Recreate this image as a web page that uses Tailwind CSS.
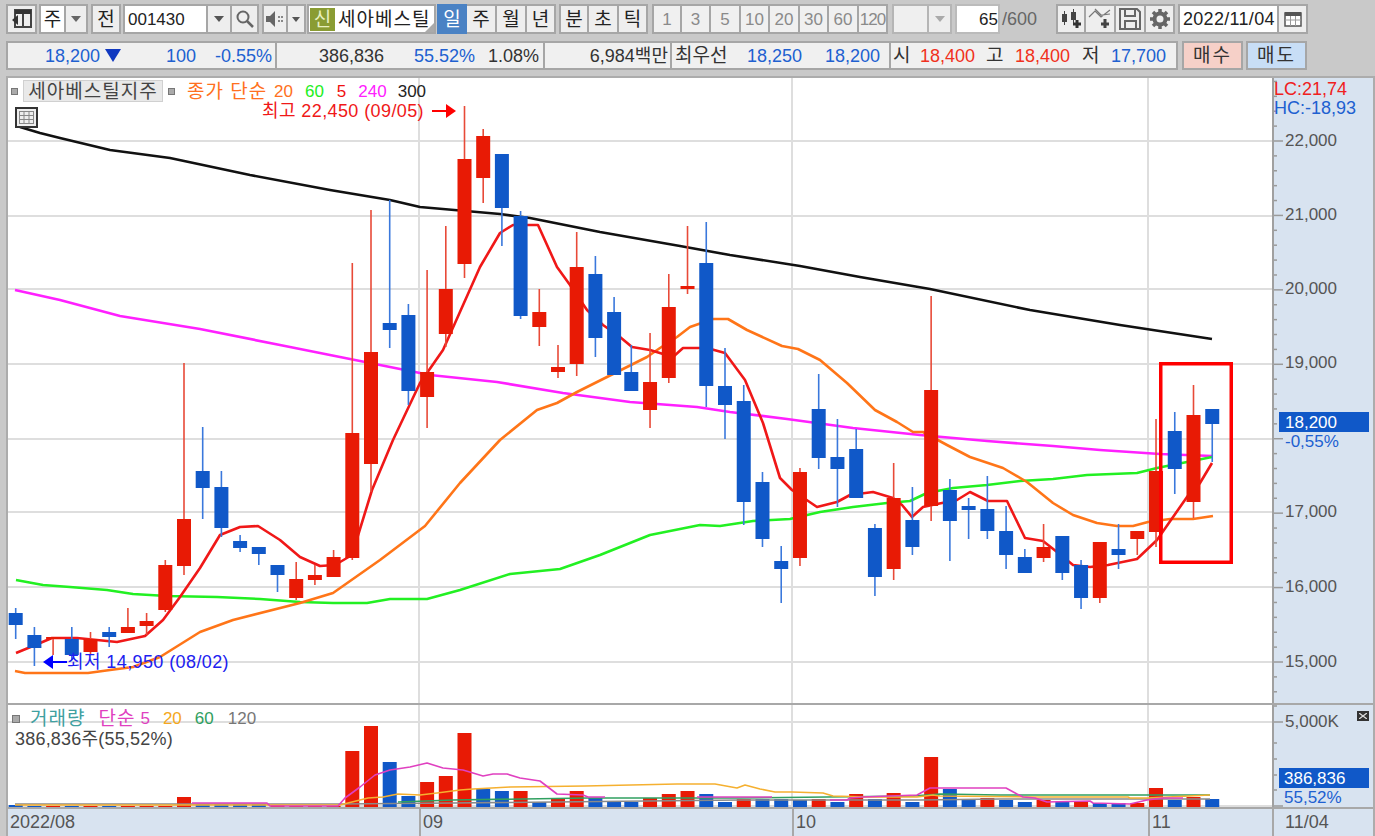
<!DOCTYPE html>
<html lang="ko">
<head>
  <meta charset="UTF-8" />
  <title>세아베스틸지주 차트</title>
  <script src="https://cdn.jsdelivr.net/npm/@tailwindcss/browser@4"></script>
</head>
<body class="bg-[#c9c9c9] [font-family:'Liberation_Sans','Noto_Sans_CJK_KR',sans-serif] text-[#222] overflow-hidden">
<div class="w-[1375px] h-[836px] flex flex-col overflow-hidden">

  <!-- Toolbar row 1 -->
  <div class="flex items-stretch h-[30px] mt-[4px] ml-[6px] text-[19px] leading-none">
    <div class="w-[31px] border-2 border-[#a6a6a6] bg-[#eee] flex items-center justify-center">
      <svg width="22" height="20" viewBox="0 0 22 20"><rect x="4" y="1" width="16" height="17" fill="none" stroke="#444" stroke-width="2"/><rect x="4" y="1" width="16" height="4" fill="#333"/><rect x="11" y="5" width="2" height="13" fill="#444"/><path d="M1 11 L7 6 V16 Z" fill="#333"/></svg>
    </div>
    <div class="ml-[2px] w-[27px] border-2 border-[#a6a6a6] bg-white flex items-center justify-center">주</div>
    <div class="w-[22px] border-2 border-l-0 border-[#a6a6a6] bg-[#eee] flex items-center justify-center">
      <svg width="10" height="6"><path d="M0 0H10L5 6Z" fill="#666"/></svg>
    </div>
    <div class="ml-[3px] w-[30px] border-2 border-[#a6a6a6] bg-[#eee] flex items-center justify-center">전</div>
    <div class="ml-[2px] w-[85px] border-2 border-[#a6a6a6] bg-white flex items-center pl-[3px] text-[17px]">001430</div>
    <div class="w-[22px] border-y-2 border-[#a6a6a6] bg-[#eee] flex items-center justify-center">
      <svg width="10" height="6"><path d="M0 0H10L5 6Z" fill="#555"/></svg>
    </div>
    <div class="w-[29px] border-2 border-[#a6a6a6] bg-[#eee] flex items-center justify-center">
      <svg width="20" height="20" viewBox="0 0 20 20"><circle cx="8" cy="8" r="5.500" fill="none" stroke="#666" stroke-width="2"/><path d="M12 12L18 18" stroke="#666" stroke-width="2.500"/></svg>
    </div>
    <div class="ml-[3px] w-[26px] border-2 border-[#a6a6a6] bg-[#eee] flex items-center justify-center">
      <svg width="20" height="18" viewBox="0 0 20 18"><path d="M1 6H5L10 1V17L5 12H1Z" fill="#666"/><path d="M13 6h2v2h-2zM16 6h2v2h-2zM13 10h2v2h-2zM16 10h2v2h-2z" fill="#888"/></svg>
    </div>
    <div class="w-[18px] border-2 border-l-0 border-[#a6a6a6] bg-[#eee] flex items-center justify-center">
      <svg width="8" height="5"><path d="M0 0H8L4 5Z" fill="#555"/></svg>
    </div>
    <div class="ml-[1px] w-[129px] border-2 border-[#a6a6a6] bg-white flex items-center pl-[1px] gap-[3px] relative">
      <span class="w-[25px] h-[23px] bg-[#8a9c33] text-[#e8f0c0] flex items-center justify-center">신</span>
      <span class="whitespace-nowrap tracking-[1px]">세아베스틸</span>
      <svg class="absolute right-0 bottom-0" width="9" height="9"><path d="M9 0V9H0Z" fill="#aaa"/></svg>
    </div>
    <div class="ml-[1px] flex">
      <div class="w-[30px] bg-[#4a82c4] text-white flex items-center justify-center">일</div>
      <div class="w-[30px] border-2 border-l-0 border-[#a6a6a6] bg-[#eee] flex items-center justify-center">주</div>
      <div class="w-[30px] border-2 border-l-0 border-[#a6a6a6] bg-[#eee] flex items-center justify-center">월</div>
      <div class="w-[29px] border-2 border-l-0 border-[#a6a6a6] bg-[#eee] flex items-center justify-center">년</div>
    </div>
    <div class="ml-[3px] flex">
      <div class="w-[30px] border-2 border-[#a6a6a6] bg-[#eee] flex items-center justify-center">분</div>
      <div class="w-[30px] border-2 border-l-0 border-[#a6a6a6] bg-[#eee] flex items-center justify-center">초</div>
      <div class="w-[29px] border-2 border-l-0 border-[#a6a6a6] bg-[#eee] flex items-center justify-center">틱</div>
    </div>
    <div class="ml-[4px] flex text-[#8a8a8a] text-[17px]">
      <div class="w-[30px] border-2 border-[#a6a6a6] bg-[#f0f0f0] flex items-center justify-center">1</div>
      <div class="w-[29px] border-2 border-l-0 border-[#a6a6a6] bg-[#f0f0f0] flex items-center justify-center">3</div>
      <div class="w-[30px] border-2 border-l-0 border-[#a6a6a6] bg-[#f0f0f0] flex items-center justify-center">5</div>
      <div class="w-[29px] border-2 border-l-0 border-[#a6a6a6] bg-[#f0f0f0] flex items-center justify-center">10</div>
      <div class="w-[30px] border-2 border-l-0 border-[#a6a6a6] bg-[#f0f0f0] flex items-center justify-center">20</div>
      <div class="w-[29px] border-2 border-l-0 border-[#a6a6a6] bg-[#f0f0f0] flex items-center justify-center">30</div>
      <div class="w-[30px] border-2 border-l-0 border-[#a6a6a6] bg-[#f0f0f0] flex items-center justify-center">60</div>
      <div class="w-[29px] border-2 border-l-0 border-[#a6a6a6] bg-[#f0f0f0] flex items-center justify-center tracking-[-1px]">120</div>
    </div>
    <div class="ml-[4px] w-[37px] border-2 border-[#b5b5b5] bg-[#efefef]"></div>
    <div class="w-[23px] border-2 border-l-0 border-[#b5b5b5] bg-[#eee] flex items-center justify-center">
      <svg width="10" height="6"><path d="M0 0H10L5 6Z" fill="#aaa"/></svg>
    </div>
    <div class="ml-[3px] w-[45px] bg-white border-2 border-[#bbb] flex items-center justify-end text-[17px]">65</div>
    <div class="ml-[2px] w-[54px] flex items-center text-[#666] text-[18px]">/600</div>
    <div class="flex">
      <div class="w-[30px] border-2 border-[#a6a6a6] bg-[#eee] flex items-center justify-center">
        <svg width="24" height="22" viewBox="0 0 24 22"><path d="M3 6h5v8H3zM12 4h5v8h-5z" fill="#444"/><path d="M5.500 3v14M14.500 1v14" stroke="#444"/><path d="M18 12v8M14 16h8" stroke="#333" stroke-width="3"/></svg>
      </div>
      <div class="w-[30px] border-2 border-l-0 border-[#a6a6a6] bg-[#eee] flex items-center justify-center">
        <svg width="24" height="22" viewBox="0 0 24 22"><path d="M1 9L7 3L13 9L22 2M7 1L13 7L22 6" fill="none" stroke="#777" stroke-width="1.200"/><path d="M17 11v9M13 16h8" stroke="#444" stroke-width="3"/></svg>
      </div>
      <div class="w-[30px] border-2 border-l-0 border-[#a6a6a6] bg-[#eee] flex items-center justify-center">
        <svg width="24" height="22" viewBox="0 0 24 22"><path d="M2 1H19L22 4V21H2Z" fill="none" stroke="#666" stroke-width="2"/><path d="M7 2V8H17V2M7 21V13H18V21" fill="none" stroke="#666" stroke-width="2"/></svg>
      </div>
      <div class="w-[29px] border-2 border-l-0 border-[#a6a6a6] bg-[#eee] flex items-center justify-center">
        <svg width="22" height="22" viewBox="0 0 22 22"><circle cx="11" cy="11" r="5.500" fill="none" stroke="#666" stroke-width="4"/><path d="M11 1v20M1 11h20M4 4l14 14M18 4L4 18" stroke="#666" stroke-width="3.500" stroke-dasharray="3.500 13"/></svg>
      </div>
    </div>
    <div class="ml-[3px] w-[101px] border-2 border-[#a6a6a6] bg-white flex items-center pl-[3px] whitespace-nowrap text-[18px] tracking-[0.3px]">2022/11/04</div>
    <div class="w-[29px] border-2 border-l-0 border-[#a6a6a6] bg-[#eee] flex items-center justify-center">
      <svg width="18" height="16" viewBox="0 0 18 16"><rect x="1" y="2" width="16" height="13" fill="#fff" stroke="#555" stroke-width="1.500"/><rect x="1" y="1" width="16" height="4" fill="#555"/><path d="M1 9h16M6.500 5v10M11.500 5v10" stroke="#999"/></svg>
    </div>
  </div>

  <!-- Toolbar row 2: quote strip -->
  <div class="flex h-[29px] mt-[7px] ml-[6px] text-[18px] leading-none text-[#333] whitespace-nowrap">
    <div class="w-[269px] border-2 border-r-0 border-[#a6a6a6] bg-[#f0f0f0] flex items-center">
      <span class="w-[92px] text-right text-[#2060d0]">18,200</span>
      <svg class="ml-[5px]" width="16" height="13"><path d="M0 0H16L8 13Z" fill="#1038c0"/></svg>
      <span class="w-[75px] text-right text-[#2060d0]">100</span>
      <span class="w-[76px] text-right text-[#2060d0]">-0.55%</span>
    </div>
    <div class="w-[268px] border-2 border-r-0 border-[#a6a6a6] bg-[#f0f0f0] flex items-center">
      <span class="w-[107px] text-right">386,836</span>
      <span class="w-[91px] text-right text-[#2060d0]">55.52%</span>
      <span class="w-[64px] text-right">1.08%</span>
    </div>
    <div class="w-[127px] border-2 border-r-0 border-[#a6a6a6] bg-[#f0f0f0] flex items-center justify-end pr-[2px]">6,984백만</div>
    <div class="w-[219px] border-2 border-r-0 border-[#a6a6a6] bg-[#f0f0f0] flex items-center pl-[3px]">
      <span class="w-[62px] text-[19px]">최우선</span>
      <span class="w-[65px] text-right text-[#2060d0]">18,250</span>
      <span class="w-[78px] text-right text-[#2060d0]">18,200</span>
    </div>
    <div class="w-[289px] border-2 border-[#a6a6a6] bg-[#f0f0f0] flex items-center pl-[2px]">
      <span class="w-[82px] flex justify-between items-center"><span class="text-[19px]">시</span><span class="text-[#f03020]">18,400</span></span>
      <span class="ml-[11px] w-[84px] flex justify-between items-center"><span class="text-[19px]">고</span><span class="text-[#f03020]">18,400</span></span>
      <span class="ml-[12px] w-[84px] flex justify-between items-center"><span class="text-[19px]">저</span><span class="text-[#2060d0]">17,700</span></span>
    </div>
    <div class="ml-[4px] w-[61px] border-2 border-[#a6a6a6] bg-[#f6d0c8] flex items-center justify-center text-[19px] tracking-[2px]">매수</div>
    <div class="ml-[3px] w-[61px] border-2 border-[#a6a6a6] bg-[#c8def6] flex items-center justify-center text-[19px] tracking-[2px]">매도</div>
  </div>

  <!-- Chart panel -->
  <div class="mt-[6px] ml-[6px] w-[1369px] flex-1 flex flex-col border-2 border-b-0 border-[#acacac] bg-white text-[17px] leading-none whitespace-nowrap">

    <!-- Price pane -->
    <div class="flex h-[627px] border-b-2 border-[#a8a8a8]">
      <div class="relative w-[1264px]">
        <svg id="priceChart" class="block" width="1264" height="625" viewBox="8 78 1264 625"></svg>
        <div class="absolute left-[3px] top-[2px] flex items-center">
          <span class="w-[7px] h-[7px] bg-[#aaa] border border-[#777]"></span>
          <span class="ml-[5px] w-[140px] h-[22px] bg-[#e9e9e9] border border-[#d0d0d0] flex items-center justify-center text-[#444] text-[19px] tracking-[1px]">세아베스틸지주</span>
          <span class="ml-[5px] w-[7px] h-[7px] bg-[#aaa] border border-[#777]"></span>
          <span class="ml-[12px] w-[80px] text-[#ff7020] text-[19px] tracking-[1px]">종가 단순</span>
          <span class="ml-[7px] text-[#ff7020]">20</span>
          <span class="ml-[12px] text-[#22ee22]">60</span>
          <span class="ml-[13px] text-[#f01010]">5</span>
          <span class="ml-[12px] text-[#ff20ff]">240</span>
          <span class="ml-[11px] text-[#222]">300</span>
        </div>
        <div class="absolute left-[254px] top-[24px] flex items-center text-[#f01818] text-[18px] tracking-[0.4px]">
          최고 22,450 (09/05)
          <svg class="ml-[8px]" width="24" height="14"><path d="M0 7H16" stroke="#f00" stroke-width="2"/><path d="M14 0L24 7L14 14Z" fill="#f00"/></svg>
        </div>
        <div class="absolute left-[7px] top-[29px] w-[23px] h-[21px] bg-[#eee] border-2 border-[#333] flex items-center justify-center">
          <svg width="15" height="13"><path d="M0 .5H15M0 4.500H15M0 8.500H15M0 12.500H15M.5 0V13M5 0V13M10 0V13M14.500 0V13" stroke="#888"/></svg>
        </div>
        <div class="absolute left-[35px] top-[575px] flex items-center text-[#2020f0] text-[18px] tracking-[0.4px]">
          <svg width="24" height="14"><path d="M8 7H24" stroke="#00f" stroke-width="2"/><path d="M10 0L0 7L10 14Z" fill="#00f"/></svg>
          최저 14,950 (08/02)
        </div>
      </div>
      <div class="w-[101px] bg-[#d8e3f0] relative border-l-2 border-[#a0a0a0]">
        <svg id="priceAxis" class="block" width="99" height="625" viewBox="1274 78 99 625"></svg>
        <div class="absolute left-0 top-[2px] text-[#f02020] text-[18px]">LC:21,74</div>
        <div class="absolute left-0 top-[21px] text-[#2060d0] text-[18px]">HC:-18,93</div>
      </div>
    </div>

    <!-- Volume pane -->
    <div class="flex h-[104px] border-b-2 border-[#a8a8a8]">
      <div class="relative w-[1264px]">
        <svg id="volumeChart" class="block" width="1264" height="102" viewBox="8 705 1264 102"></svg>
        <div class="absolute left-[4px] top-[4px] flex items-center">
          <span class="w-[8px] h-[8px] bg-[#aaa] border border-[#777]"></span>
          <span class="ml-[10px] text-[#40a0a0] text-[19px] tracking-[1px]">거래량</span>
          <span class="ml-[13px] text-[#e040c0] text-[19px] tracking-[1px]">단순</span>
          <span class="ml-[5px] text-[#e040c0]">5</span>
          <span class="ml-[13px] text-[#f5a820]">20</span>
          <span class="ml-[13px] text-[#30a060]">60</span>
          <span class="ml-[14px] text-[#777]">120</span>
        </div>
        <div class="absolute left-[7px] top-[25px] text-[#444] text-[18px] tracking-[0.2px]">386,836주(55,52%)</div>
      </div>
      <div class="w-[101px] bg-[#d8e3f0] relative border-l-2 border-[#a0a0a0]">
        <svg id="volumeAxis" class="block" width="99" height="102" viewBox="1274 705 99 102"></svg>
        <div class="absolute left-[83px] top-[6px] w-[12px] h-[10px] bg-[#333] flex items-center justify-center">
          <svg width="8" height="6"><path d="M0 0L8 6M8 0L0 6" stroke="#ddd" stroke-width="1.300"/></svg>
        </div>
      </div>
    </div>

    <!-- Date axis -->
    <div class="flex flex-1 bg-[#d8e3f0] text-[18px] text-[#555]">
      <div class="w-[411px] pl-[2px] pt-[4px]">2022/08</div>
      <div class="w-[373px] pl-[2px] pt-[4px] border-l-2 border-[#a8a8a8]">09</div>
      <div class="w-[356px] pl-[2px] pt-[4px] border-l-2 border-[#a8a8a8]">10</div>
      <div class="w-[124px] pl-[2px] pt-[4px] border-l-2 border-[#a8a8a8]">11</div>
      <div class="flex-1 pl-[11px] pt-[4px] border-l-2 border-[#a8a8a8]">11/04</div>
    </div>
  </div>
</div>

<script>
  // candle data in screen pixels: colour, body top, body bottom, wick top, wick bottom
  const candles = [
    ['b',613,625,608,639],['b',635,648,627,666],['r',637,639,637,655],['b',639,655,627,660],['r',639,652,632,655],
    ['b',632,637,627,647],['r',627,633,608,633],['r',621,626,613,635],['r',565,610,560,612],['r',519,566,363,575],
    ['b',471,488,427,519],['b',487,528,471,537],['b',541,548,535,552],['b',547,554,547,565],['b',565,575,565,592],
    ['r',579,598,562,600],['r',575,580,565,585],['r',557,577,550,577],['r',433,558,263,560],['r',352,464,210,492],
    ['b',323,330,200,348],['b',315,391,304,405],['r',372,397,270,428],['r',289,334,226,347],['r',159,264,106,278],
    ['r',136,178,129,203],['b',154,208,154,246],['b',216,316,211,319],['r',312,327,289,346],['r',367,372,345,378],
    ['r',267,364,232,376],['b',274,338,256,357],['b',312,375,297,375],['b',372,391,345,391],['r',382,410,333,428],
    ['r',307,378,274,383],['r',286,289,226,294],['b',263,386,222,407],['b',386,405,348,439],['b',401,502,385,525],
    ['b',482,539,472,547],['b',561,569,546,603],['r',472,558,468,566],['b',409,458,374,469],['b',457,469,419,507],
    ['b',449,498,429,498],['b',528,577,524,596],['r',498,569,463,580],['b',520,547,487,555],['r',390,506,296,521],
    ['b',490,521,479,561],['b',506,510,498,539],['b',509,531,476,539],['b',531,555,506,569],['b',557,573,549,573],
    ['r',547,558,524,562],['b',536,573,536,580],['b',565,598,560,609],['r',542,598,542,603],['b',549,555,524,569],
    ['r',531,539,531,555],['r',471,532,419,547],['b',431,469,412,494],['r',415,502,385,518],['b',409,424,409,462]
  ];
  // volume bar tops, same order as the candles
  const volumes = [
    ['b',805],['b',806],['r',806],['b',806],['r',806],['b',806],['r',806],['r',806],['r',806],['r',797],
    ['b',804],['b',804],['b',804],['b',804],['r',805],['r',806],['r',806],['r',806],['r',751],['r',726],
    ['b',762],['b',796],['r',782],['r',776],['r',733],['b',789],['b',791],['r',791],['b',802],['r',798],
    ['r',791],['b',798],['b',802],['b',802],['r',798],['r',794],['r',791],['b',794],['b',802],['r',799],
    ['b',799],['b',799],['b',800],['r',799],['b',802],['r',794],['b',799],['r',793],['b',802],['r',757],
    ['b',789],['b',800],['r',798],['b',800],['b',802],['r',800],['b',802],['r',802],['b',803],['b',803],
    ['r',803],['r',788],['b',800],['r',797],['b',799]
  ];
  // the x spacing tightens a little after candle 32
  const xAt = i => i <= 32 ? 15.7 + 18.7 * i : 631.3 + 18.74 * (i - 33);

  const ma300 = '20,127 40,133 60,138 110,150 170,158 250,175 330,190 390,200 420,207 500,214 530,218 600,232 680,246 730,255 800,266 860,277 930,289 1030,310 1120,325 1212,339';
  const ma240 = '15,290 60,300 120,316 200,329 280,345 330,355 430,375 497,382 563,393 630,402 697,407 730,412 787,419 853,428 920,435 987,441 1053,446 1100,450 1160,454 1212,456';
  const ma20 = '15,671 25,673 88,673 110,670 133,667 160,657 200,632 233,620 300,603 333,593 380,560 425,526 460,483 500,440 537,410 557,403 577,392 607,377 647,357 660,348 677,337 690,327 713,319 728,319 747,330 782,346 798,349 820,360 847,383 875,410 897,422 913,432 923,432 947,445 970,457 1003,468 1027,482 1053,503 1073,515 1097,523 1117,526 1133,526 1148,522 1170,519 1193,519 1213,516';
  const ma60 = '16,580 43,585 70,587 107,590 133,594 167,596 217,597 260,599 300,602 333,603 367,603 390,599 427,599 460,590 510,574 560,569 600,555 650,535 700,525 720,526 753,521 790,519 820,512 853,507 887,503 910,501 927,493 953,488 987,485 1020,481 1053,479 1087,475 1137,473 1157,468 1187,462 1212,457';
  const ma5 = '16,653 33,646 52,638 77,638 117,642 145,636 163,620 180,597 200,568 220,535 240,527 258,526 280,540 300,557 320,566 335,565 352,555 372,490 393,440 420,383 443,350 480,267 500,233 513,225 538,225 557,267 570,285 587,310 603,325 620,337 632,347 650,350 673,357 683,348 707,348 725,353 745,380 763,423 780,478 792,490 817,507 837,502 850,495 873,492 893,498 902,505 912,517 923,507 937,504 957,500 970,492 988,501 1007,501 1025,538 1043,541 1057,552 1073,565 1090,567 1108,565 1137,559 1157,540 1187,497 1200,483 1212,463';

  const volMa5 = ['192,803 267,803 270,806 338,806 345,798 360,787 375,775 390,770 410,767 427,763 443,768 463,770 483,776 493,774 507,774 520,778 540,781 557,794 583,795 588,797 605,797', '697,797 772,797', '830,800 847,800 850,798 863,797 917,795 930,788 1006,788 1017,794 1023,797 1035,798 1047,802 1090,801 1093,803 1130,804 1147,800 1163,798 1183,798'];
  const volMa20 = '15,805 175,805 340,805 360,800 368,798 383,797 398,794 420,795 437,793 460,790 473,789 510,787 585,786 677,784 715,784 737,788 745,785 760,789 775,792 792,792 823,793 833,796 868,797 917,797 933,795 940,796 1035,797 1128,797 1130,798 1147,798 1210,795';
  const volMa60 = '398,802 453,800 587,798 740,798 827,797 913,796 940,794 1000,795 1210,795';
  const volMa120 = '15,804 340,804 453,803 740,800 920,800 1000,799 1210,799';

  const poly = (pts, color, w) => `<polyline points="${pts}" fill="none" stroke="${color}" stroke-width="${w}" stroke-linejoin="round"/>`;
  const hline = (y, x1, x2, color, w) => `<line x1="${x1}" x2="${x2}" y1="${y}" y2="${y}" stroke="${color}" stroke-width="${w}"/>`;
  const vline = (x, y1, y2, color, w) => `<line x1="${x}" x2="${x}" y1="${y1}" y2="${y2}" stroke="${color}" stroke-width="${w}"/>`;

  // price pane
  let price = '';
  [141, 216, 289, 364, 439, 512, 587, 662].forEach(y => price += hline(y, 8, 1272, '#dedede', 2));
  [419, 792, 1148].forEach(x => price += vline(x, 78, 704, '#dedede', 2));
  price += poly(ma300, '#111', 2.6) + poly(ma240, '#ff20ff', 2.6) + poly(ma60, '#22f022', 2.6) + poly(ma20, '#ff7518', 2.6) + poly(ma5, '#f01818', 2.6);
  candles.forEach((c, i) => {
    const x = xAt(i);
    price += vline(x, c[3], c[4], c[0] === 'r' ? '#e84a38' : '#3a78dc', 1.6);
    price += `<rect x="${x - 7}" y="${c[1]}" width="14" height="${c[2] - c[1]}" fill="${c[0] === 'r' ? '#e81a05' : '#1058c8'}"/>`;
  });
  price += `<rect x="1160.750" y="363.750" width="70.500" height="198.500" fill="none" stroke="#ff0000" stroke-width="3.500"/>`;
  document.getElementById('priceChart').innerHTML = price;

  // price axis: minor tick every 14.9px, label every fifth
  const axisText = (x, y, s, fill) => `<text x="${x}" y="${y}" dy="0.35em" font-size="17" fill="${fill}">${s}</text>`;
  let pa = '';
  for (let k = -4; k < 38; k++) {
    const y = 141 + k * 14.886;
    if (y > 78 && y < 703) pa += hline(y, 1274, k % 5 === 0 ? 1283 : 1277, '#9a9a9a', 1.5);
  }
  ['22,000', '21,000', '20,000', '19,000', null, '17,000', '16,000', '15,000'].forEach((s, k) => {
    if (s) pa += axisText(1285, [140, 214, 288, 362, 437, 511, 586, 661][k], s, '#555');
  });
  pa += `<rect x="1279" y="412" width="90" height="20" fill="#1058c8"/>` + axisText(1285, 422, '18,200', '#fff') + axisText(1285, 441, '-0,55%', '#2060d0');
  document.getElementById('priceAxis').innerHTML = pa;

  // volume pane
  let vol = hline(722, 8, 1272, '#dedede', 2) + hline(806, 8, 1272, '#dedede', 2);
  [419, 792, 1148].forEach(x => vol += vline(x, 705, 808, '#dedede', 2));
  volumes.forEach((v, i) => {
    const x = xAt(i);
    vol += `<rect x="${x - 7}" y="${v[1]}" width="14" height="${807 - v[1]}" fill="${v[0] === 'r' ? '#e81a05' : '#1058c8'}"/>`;
  });
  vol += poly(volMa120, '#8a8a8a', 1.6) + poly(volMa60, '#30a060', 1.6) + poly(volMa20, '#f5b030', 1.6);
  volMa5.forEach(p => vol += poly(p, '#e040c0', 1.6));
  document.getElementById('volumeChart').innerHTML = vol;

  let va = '';
  [706, 722, 743, 759, 775, 790, 806].forEach((y, k) => va += hline(y, 1274, k === 1 || k === 6 ? 1283 : 1277, '#9a9a9a', 1.5));
  va += axisText(1285, 721, '5,000K', '#555');
  va += `<rect x="1279" y="768" width="90" height="20" fill="#1058c8"/>` + axisText(1284, 778, '386,836', '#fff') + axisText(1284, 797, '55,52%', '#2060d0');
  document.getElementById('volumeAxis').innerHTML = va;
</script>
</body>
</html>
